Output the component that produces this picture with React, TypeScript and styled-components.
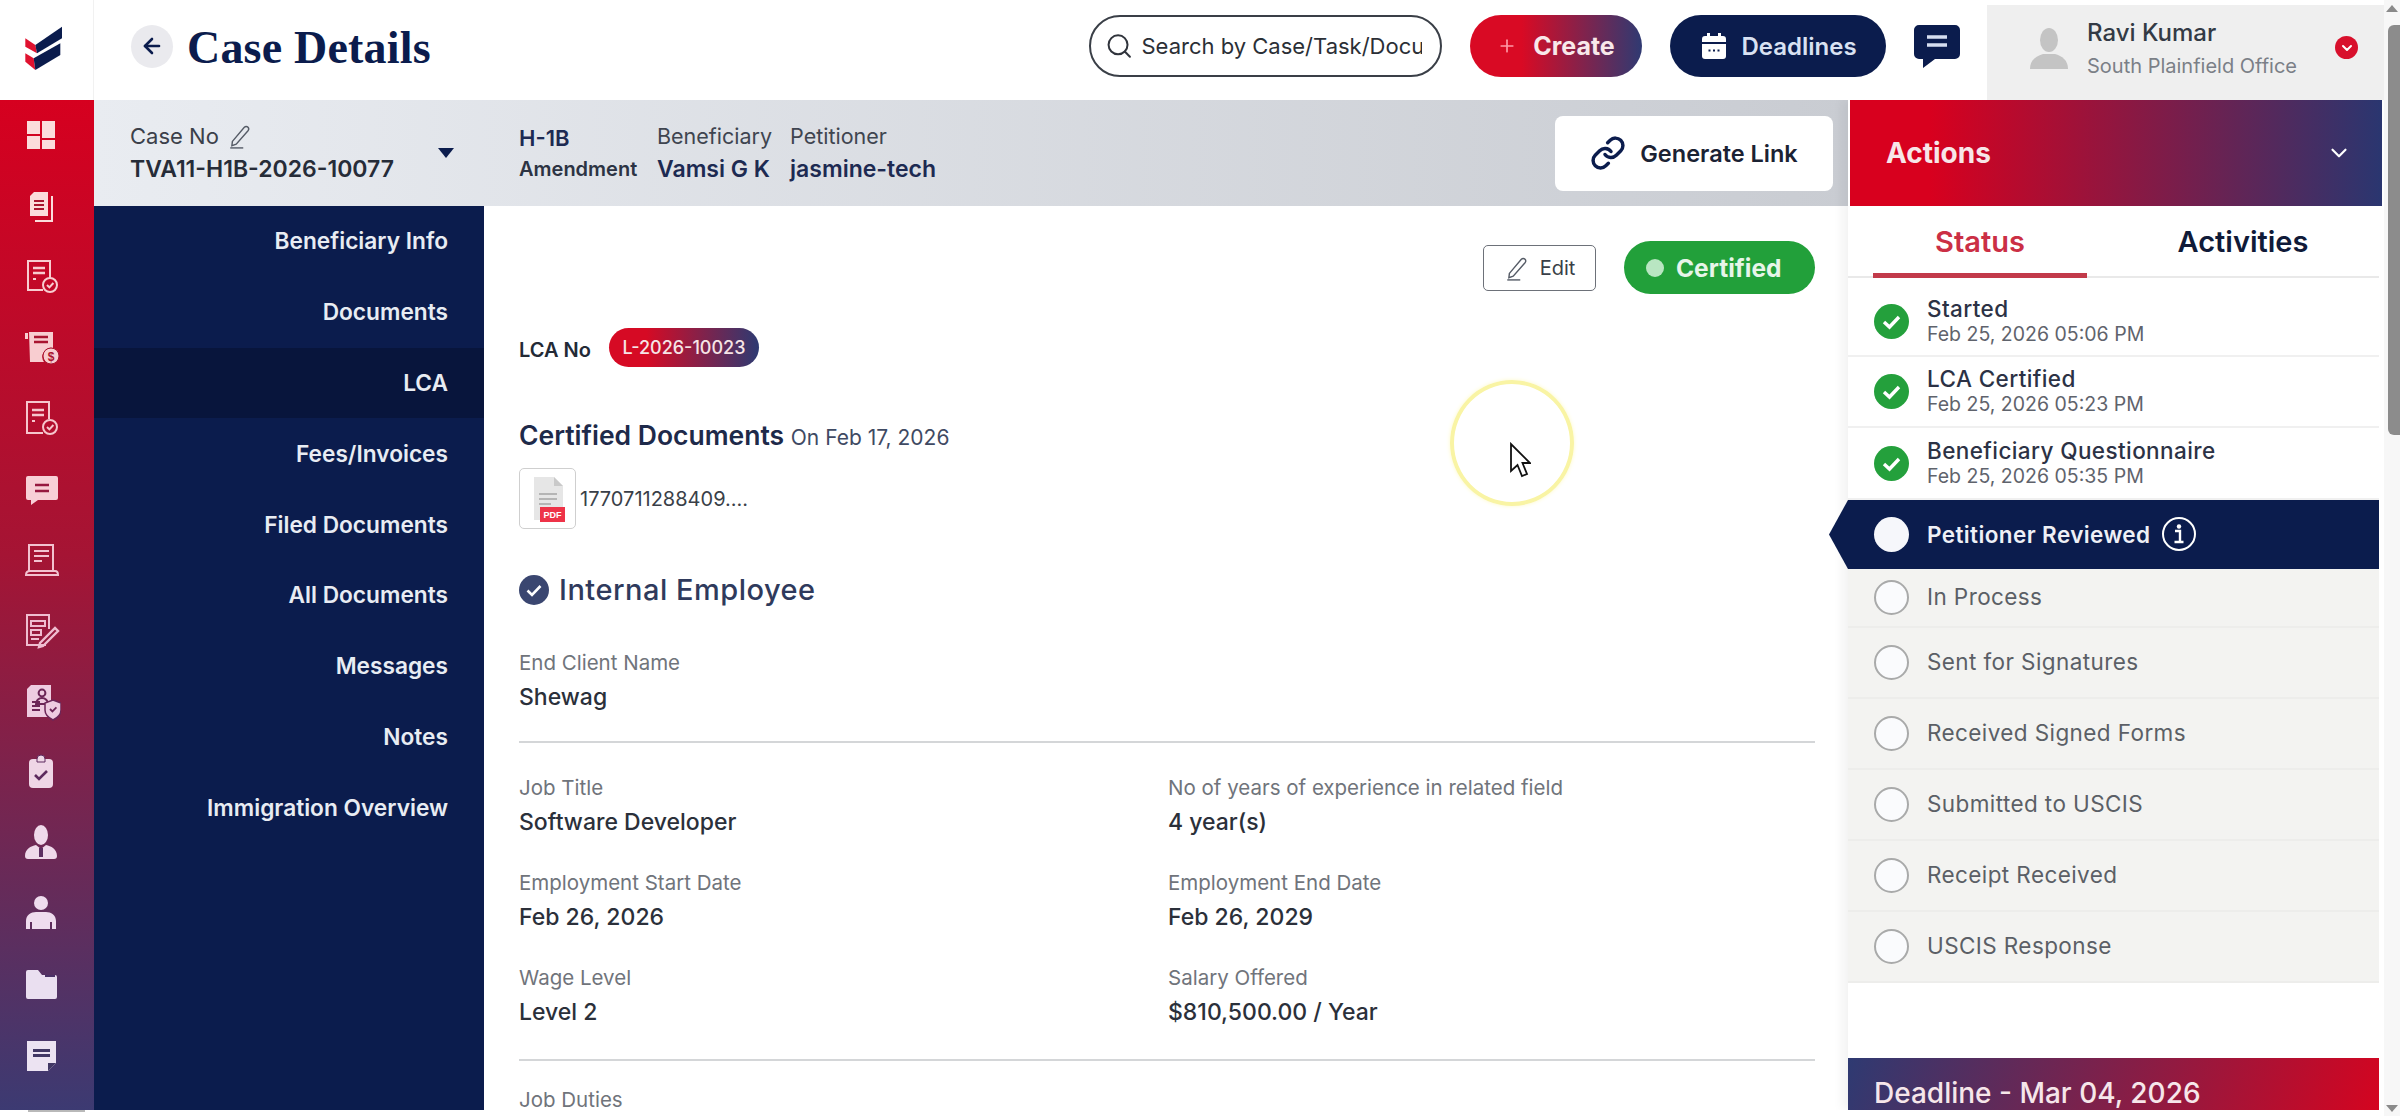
import styled, { createGlobalStyle } from "styled-components";
import { ArrowLeft, ChevronDown, Link, Plus, Search } from "lucide-react";
import { ReactNode } from "react";

const NAVY = "#0b1c4d";
const SANS = `"Inter", "Liberation Sans", sans-serif`;

const GlobalStyle = createGlobalStyle`
    html, body {
        margin: 0;
        padding: 0;
        background: #fff;
        overflow: hidden;
    }
    * {
        box-sizing: border-box;
    }
`;

const railIcons: ReactNode[] = [
    <g fill="#fbdcdc"><rect x="6" y="6" width="13" height="13" /><rect x="6" y="21" width="13" height="13" /><rect x="21" y="6" width="13" height="17" /><rect x="21" y="25" width="13" height="9" /></g>,
    <g><path d="M13 6h14v24H9V10z" fill="#fbdcdc" /><path d="M31 10v25H14" fill="none" stroke="#fbdcdc" strokeWidth="2" /><path d="M13 15h10M13 19h10M13 23h10" stroke="#a8142f" strokeWidth="2" /></g>,
    <g fill="none" stroke="#f8cdd0" strokeWidth="2"><path d="M22 34H7V5h22v17" /><path d="M12 12h12M12 17h12" strokeWidth="2.4" /><path d="M12 23h3" /><circle cx="29" cy="29" r="7" /><path d="M26 29l2.4 2.4 4-4.4" /></g>,
    <g><path d="M4 6h3v6H4z" fill="#f8cdd0" /><path d="M8 5h24v16a9 9 0 0 0-9 14H9z" fill="#f8cdd0" /><path d="M13 10h14M13 15h14" stroke="#a8142f" strokeWidth="2.4" /><circle cx="30" cy="29" r="8" fill="#f8cdd0" stroke="#a8142f" strokeWidth="1" /><text x="30" y="33.5" fontSize="12" fontWeight="700" textAnchor="middle" fill="#a8142f" fontFamily="Liberation Sans">$</text></g>,
    <g fill="none" stroke="#f6c6cd" strokeWidth="2"><path d="M22 35H6V4h22v17" /><path d="M11 12h12M11 17h12" strokeWidth="2.4" /><path d="M11 23h3" /><circle cx="29" cy="29" r="7" /><path d="M26 29l2.4 2.4 4-4.4" /></g>,
    <g><path d="M7 8h28a2 2 0 0 1 2 2v20a2 2 0 0 1-2 2H17l-7 5v-5H7a2 2 0 0 1-2-2V10a2 2 0 0 1 2-2z" fill="#f8cfd6" /><path d="M14 17h14M14 23h14" stroke="#97183f" strokeWidth="2.4" /></g>,
    <g fill="none" stroke="#f3c2d0" strokeWidth="2"><path d="M8 33V6h24v27" /><path d="M13 12h15M13 17h15M13 22h8" /><path d="M5 36c0-3 2-4 4-4h25c2 0 3 1 3 4z" /></g>,
    <g fill="none" stroke="#efbdd0" strokeWidth="2"><path d="M25 35H6V5h22v14" /><path d="M10 11h14v5H10zM10 20h10v5H10zM10 29h8" /><path d="M19 33l-1 4 4-1 15-15-3-3z" strokeWidth="2.4" /></g>,
    <g><path d="M10 4h20v32H6V8z" fill="#eecbe0" /><circle cx="21" cy="12" r="3.4" fill="none" stroke="#6c2557" strokeWidth="2" /><path d="M15 23a6 6 0 0 1 12 0z" fill="none" stroke="#6c2557" strokeWidth="2" /><path d="M11 21h8M11 25h8M11 29h8" stroke="#6c2557" strokeWidth="2" /><path d="M32 19l8 3v7c0 5-4 8-8 10-4-2-8-5-8-10v-7z" fill="#eecbe0" stroke="#6c2557" strokeWidth="1.5" /><path d="M29 28l2.4 2.4 4-4" stroke="#6c2557" strokeWidth="1.8" fill="none" /></g>,
    <g><rect x="8" y="8" width="24" height="29" rx="4" fill="#efd6e6" /><path d="M16 8a4 4 0 0 1 8 0v3h-8z" fill="#efd6e6" stroke="#5d2a5e" strokeWidth="1" /><path d="M14 24l4 4 8-8" fill="none" stroke="#5d2a5e" strokeWidth="2.6" /></g>,
    <g fill="#efd9ea"><ellipse cx="20" cy="13" rx="7" ry="10" /><path d="M4 34c0-7 6-10 11-11l5 4 5-4c5 1 11 4 11 11 0 2-1 3-3 3H7c-2 0-3-1-3-3z" /><path d="M18 26h4v9h-4z" fill="#5d2f62" /></g>,
    <g fill="#efdcee"><circle cx="20" cy="10" r="7" /><path d="M5 36v-8c0-6 5-9 10-9h10c5 0 10 3 10 9v8h-4v-7h-2v7H11v-7H9v7z" /></g>,
    <g><path d="M5 9a2 2 0 0 1 2-2h10l4 5h13a2 2 0 0 1 2 2v20a2 2 0 0 1-2 2H7a2 2 0 0 1-2-2z" fill="#eadff0" /><path d="M24 13h10" stroke="#4b3268" strokeWidth="2" /></g>,
    <g><path d="M6 7h29v22l-8 8H6z" fill="#ece3f2" /><path d="M12 15h17v3H12zM12 20h17v3H12z" fill="#413764" /><path d="M27 37v-8h8" fill="#413764" /></g>,
];

const navItems = ["Beneficiary Info", "Documents", "LCA", "Fees/Invoices", "Filed Documents", "All Documents", "Messages", "Notes", "Immigration Overview"];

const doneSteps = [
    { name: "Started", when: "Feb 25, 2026 05:06 PM", height: 79, first: true },
    { name: "LCA Certified", when: "Feb 25, 2026 05:23 PM", height: 71, first: false },
    { name: "Beneficiary Questionnaire", when: "Feb 25, 2026 05:35 PM", height: 72, first: false },
];

const pendingSteps = ["In Process", "Sent for Signatures", "Received Signed Forms", "Submitted to USCIS", "Receipt Received", "USCIS Response"];

const Pencil = ({ size = 24 }: { size?: number }) => (
    <svg width={size} height={size} viewBox="0 0 24 24" fill="none" stroke="#555b66" strokeWidth="1.3">
        <path d="M5 17L16 4c1-1 2.5-1 3.4 0s.8 2.2 0 3.2L8.5 19.5 4.5 21z" />
        <path d="M3 23h12" />
    </svg>
);

const Detail = ({ label, value }: { label: string; value: string }) => (
    <Field>
        <FieldLabel>{label}</FieldLabel>
        <FieldValue>{value}</FieldValue>
    </Field>
);

export default function App() {
    return (
        <Shell>
            <GlobalStyle />
            <Page>
                <Header>
                    <LogoCell>
                        <svg width="60" height="55" viewBox="0 0 180 165">
                            <path d="M25 55l30 20 5 25-35-20z" fill="#e0122f" />
                            <path d="M55 75l80-55v35l-75 45z" fill={NAVY} />
                            <path d="M25 100l25 15 5 35-30-25z" fill="#e0122f" />
                            <path d="M50 115l80-45v35l-75 45z" fill={NAVY} />
                        </svg>
                    </LogoCell>
                    <BackButton><ArrowLeft size={24} color={NAVY} strokeWidth={2.6} /></BackButton>
                    <PageTitle>Case Details</PageTitle>
                    <HeaderActions>
                        <SearchBox>
                            <Search size={34} color="#30343c" strokeWidth={1.7} />
                            <SearchText>Search by Case/Task/Document</SearchText>
                        </SearchBox>
                        <CreateButton><Plus size={20} color="#ff9aa6" strokeWidth={2} />Create</CreateButton>
                        <DeadlineButton>
                            <svg width="30" height="30" viewBox="0 0 30 30">
                                <path d="M3 8a3 3 0 0 1 3-3h2V2h3v3h8V2h3v3h2a3 3 0 0 1 3 3v3H3z" fill="#fff" />
                                <path d="M3 13h24v12a3 3 0 0 1-3 3H6a3 3 0 0 1-3-3z" fill="#fff" />
                                <path d="M9.5 19.5h2M14 19.5h2M18.5 19.5h2" stroke={NAVY} strokeWidth="2" />
                            </svg>
                            Deadlines
                        </DeadlineButton>
                        <ChatIcon viewBox="0 0 48 44" width="48" height="44">
                            <path d="M6 1h36a5 5 0 0 1 5 5v24a5 5 0 0 1-5 5H22l-12 9v-9H6a5 5 0 0 1-5-5V6a5 5 0 0 1 5-5z" fill={NAVY} />
                            <path d="M14 13h20M14 21h20" stroke="#d6def0" strokeWidth="3.6" />
                        </ChatIcon>
                        <UserBox>
                            <svg width="42" height="42" viewBox="0 0 42 42">
                                <ellipse cx="21" cy="13" rx="9" ry="12" fill="#c4c4c4" />
                                <path d="M2 42c0-9 6-13 13-15h12c7 2 13 6 13 15z" fill="#c4c4c4" />
                            </svg>
                            <UserText>
                                <UserName>Ravi Kumar</UserName>
                                <UserOffice>South Plainfield Office</UserOffice>
                            </UserText>
                            <UserMenu><ChevronDown size={16} color="#fff" strokeWidth={3} /></UserMenu>
                        </UserBox>
                    </HeaderActions>
                </Header>
                <Body>
                    <Rail>
                        {railIcons.map((icon, i) => (
                            <svg key={i} width="40" height="40" viewBox="0 0 40 40">{icon}</svg>
                        ))}
                    </Rail>
                    <Center>
                        <CaseBar>
                            <CaseNo>
                                <CaseLabel>Case No <Pencil size={26} /></CaseLabel>
                                <CaseValue>TVA11-H1B-2026-10077</CaseValue>
                            </CaseNo>
                            <Caret />
                            <VisaBlock>
                                <VisaType>H-1B</VisaType>
                                <VisaSub>Amendment</VisaSub>
                            </VisaBlock>
                            <PartyBlock>
                                <PartyLabel>Beneficiary</PartyLabel>
                                <PartyValue>Vamsi G K</PartyValue>
                            </PartyBlock>
                            <PartyBlock>
                                <PartyLabel>Petitioner</PartyLabel>
                                <PartyValue>jasmine-tech</PartyValue>
                            </PartyBlock>
                            <GenerateLink><Link size={36} color={NAVY} strokeWidth={2.3} />Generate Link</GenerateLink>
                        </CaseBar>
                        <Split>
                            <SideNav>
                                {navItems.map(item => (
                                    <NavItem key={item} $active={item === "LCA"}>{item}</NavItem>
                                ))}
                            </SideNav>
                            <Content>
                                <TopActions>
                                    <EditButton><Pencil size={26} />Edit</EditButton>
                                    <CertifiedPill><PillDot />Certified</CertifiedPill>
                                </TopActions>
                                <LcaRow>
                                    <LcaLabel>LCA No</LcaLabel>
                                    <LcaBadge>L-2026-10023</LcaBadge>
                                </LcaRow>
                                <DocsTitle>Certified Documents <DocsDate>On Feb 17, 2026</DocsDate></DocsTitle>
                                <FileRow>
                                    <FileTile>
                                        <svg width="40" height="50" viewBox="0 0 40 50">
                                            <path d="M6 3h20l9 9v34H6z" fill="#e6e6e6" />
                                            <path d="M26 3l9 9h-9z" fill="#c9c9c9" />
                                            <path d="M11 20h18M11 25h18M11 30h12" stroke="#b5b5b5" strokeWidth="2" />
                                            <rect x="12" y="33" width="25" height="15" fill="#ee3348" />
                                            <text x="24.5" y="44" fontSize="9" fontWeight="700" textAnchor="middle" fill="#fff" fontFamily="Liberation Sans">PDF</text>
                                        </svg>
                                    </FileTile>
                                    <FileName>1770711288409....</FileName>
                                </FileRow>
                                <EmployeeRow>
                                    <svg width="30" height="30" viewBox="0 0 30 30">
                                        <circle cx="15" cy="15" r="15" fill="#3a4670" />
                                        <path d="M8.5 15.5l4.5 4.5 8.5-9" fill="none" stroke="#fff" strokeWidth="2.6" />
                                    </svg>
                                    Internal Employee
                                </EmployeeRow>
                                <Detail label="End Client Name" value="Shewag" />
                                <Divider />
                                <DetailGrid>
                                    <Detail label="Job Title" value="Software Developer" />
                                    <Detail label="No of years of experience in related field" value="4 year(s)" />
                                    <Detail label="Employment Start Date" value="Feb 26, 2026" />
                                    <Detail label="Employment End Date" value="Feb 26, 2029" />
                                    <Detail label="Wage Level" value="Level 2" />
                                    <Detail label="Salary Offered" value="$810,500.00 / Year" />
                                </DetailGrid>
                                <SecondDivider />
                                <FieldLabel>Job Duties</FieldLabel>
                                <PointerRing />
                                <Cursor width="22" height="36" viewBox="0 0 22 36">
                                    <path d="M2 2v27l6.5-6 4.5 11 5-2-4.5-11H21z" fill="#fff" stroke="#111" strokeWidth="1.8" />
                                </Cursor>
                            </Content>
                        </Split>
                    </Center>
                    <ActionPanel>
                        <ActionsHead>Actions<ChevronDown size={26} color="#fff" strokeWidth={2} /></ActionsHead>
                        <Tabs>
                            <Tab $active>Status</Tab>
                            <Tab>Activities</Tab>
                        </Tabs>
                        {doneSteps.map(step => (
                            <DoneRow key={step.name} $height={step.height} $first={step.first}>
                                <svg width="35" height="35" viewBox="0 0 35 35">
                                    <circle cx="17.5" cy="17.5" r="17.5" fill="#24a03c" />
                                    <path d="M10 18l5.5 5 9.5-10" fill="none" stroke="#fff" strokeWidth="3.4" />
                                </svg>
                                <StepText>
                                    <StepName>{step.name}</StepName>
                                    <StepWhen>{step.when}</StepWhen>
                                </StepText>
                            </DoneRow>
                        ))}
                        <CurrentRow>
                            <CurrentDot />
                            <CurrentName>Petitioner Reviewed</CurrentName>
                            <svg width="36" height="36" viewBox="0 0 36 36">
                                <circle cx="18" cy="18" r="16" fill="none" stroke="#fff" strokeWidth="2" />
                                <circle cx="18" cy="10.5" r="2.2" fill="#fff" />
                                <path d="M14 15h5v11M13.5 26h9" fill="none" stroke="#fff" strokeWidth="2.4" />
                            </svg>
                        </CurrentRow>
                        <PendingList>
                            {pendingSteps.map((step, i) => (
                                <PendingRow key={step} $height={i === 0 ? 59 : 71}>
                                    <PendingDot />
                                    <PendingName>{step}</PendingName>
                                </PendingRow>
                            ))}
                        </PendingList>
                        <DeadlineBar>Deadline - Mar 04, 2026</DeadlineBar>
                    </ActionPanel>
                </Body>
                <BottomTrack><BottomThumb /></BottomTrack>
            </Page>
            <ScrollTrack>
                <ScrollArrow />
                <ScrollThumb />
                <ScrollSpacer />
                <ScrollArrow $down />
            </ScrollTrack>
        </Shell>
    );
}

const Shell = styled.div`
    display: flex;
    width: 2400px;
    height: 1116px;
    overflow: hidden;
    font-family: ${SANS};
    color: ${NAVY};
`

const Page = styled.div`
    display: flex;
    flex-direction: column;
    width: 2384px;
    flex: none;
`

const Header = styled.header`
    display: flex;
    align-items: center;
    height: 100px;
    flex: none;
`

const LogoCell = styled.div`
    display: flex;
    align-items: center;
    justify-content: center;
    width: 94px;
    height: 100%;
    padding: 0 0 6px 0;
    border-right: 1px solid #f1f1f1;
`

const BackButton = styled.div`
    display: flex;
    align-items: center;
    justify-content: center;
    width: 42px;
    height: 43px;
    margin: 0 14px 8px 37px;
    border-radius: 50%;
    background: #eaeaee;
`

const PageTitle = styled.h1`
    margin: 0 0 6px 0;
    font-family: "Liberation Serif", serif;
    font-size: 46px;
    font-weight: 700;
    letter-spacing: 0.2px;
    color: ${NAVY};
`

const HeaderActions = styled.div`
    display: flex;
    align-items: center;
    height: 100%;
    margin-left: auto;
`

const SearchBox = styled.div`
    display: flex;
    align-items: center;
    gap: 8px;
    width: 353px;
    height: 62px;
    margin: 0 28px 8px 0;
    padding: 0 18px 0 14px;
    border: 2px solid #3a3f47;
    border-radius: 31px;
    overflow: hidden;
`

const SearchText = styled.span`
    font-size: 22px;
    color: #2b2f36;
    white-space: nowrap;
    overflow: hidden;
`

const Pill = styled.div`
    display: flex;
    align-items: center;
    justify-content: center;
    height: 62px;
    margin-bottom: 8px;
    border-radius: 31px;
    font-size: 24px;
    font-weight: 600;
`

const CreateButton = styled(Pill)`
    gap: 16px;
    width: 172px;
    margin-right: 28px;
    background: linear-gradient(90deg, #d90a24 30%, #2f3a72);
    color: #f8e8ea;
    font-size: 25px;
    font-weight: 700;
`

const DeadlineButton = styled(Pill)`
    gap: 12px;
    width: 216px;
    margin-right: 27px;
    background: ${NAVY};
    color: #d9e1f2;
`

const ChatIcon = styled.svg`
    margin: 0 26px 8px 0;
`

const UserBox = styled.div`
    display: flex;
    align-items: center;
    width: 397px;
    height: 95px;
    margin-top: 5px;
    padding: 0 26px 10px 41px;
    background: #efefef;
`

const UserText = styled.div`
    display: flex;
    flex-direction: column;
    gap: 7px;
    margin-left: 17px;
`

const UserName = styled.div`
    font-size: 24px;
    font-weight: 500;
    color: #333a45;
`

const UserOffice = styled.div`
    font-size: 20px;
    color: #7b7f87;
`

const UserMenu = styled.div`
    display: flex;
    align-items: center;
    justify-content: center;
    width: 23px;
    height: 23px;
    margin-left: auto;
    border-radius: 50%;
    background: #d8102c;
`

const Body = styled.div`
    display: flex;
    height: 1010px;
    flex: none;
    overflow: hidden;
`

const Rail = styled.nav`
    display: flex;
    flex-direction: column;
    align-items: center;
    gap: 30.7px;
    width: 94px;
    flex: none;
    padding: 15px 12px 0 0;
    overflow: hidden;
    background: linear-gradient(180deg, #d6001f 0%, #a51434 45%, #3c3a72 100%);
`

const Center = styled.div`
    display: flex;
    flex-direction: column;
    width: 1754px;
    flex: none;
`

const CaseBar = styled.div`
    display: flex;
    align-items: center;
    height: 106px;
    flex: none;
    padding: 0 15px 0 36px;
    background: linear-gradient(90deg, #e9ecf1 0%, #c9ccd2 100%);
`

const CaseNo = styled.div`
    display: flex;
    flex-direction: column;
    gap: 6px;
    width: 308px;
`

const CaseLabel = styled.div`
    display: flex;
    align-items: center;
    gap: 8px;
    font-size: 22px;
    color: #3b404a;
`

const CaseValue = styled.div`
    font-size: 23px;
    font-weight: 600;
    color: #262c38;
`

const Caret = styled.div`
    width: 0;
    height: 0;
    border-left: 8px solid transparent;
    border-right: 8px solid transparent;
    border-top: 10px solid ${NAVY};
`

const VisaBlock = styled.div`
    display: flex;
    flex-direction: column;
    gap: 6px;
    margin-left: 65px;
    width: 138px;
`

const VisaType = styled.div`
    font-size: 22px;
    font-weight: 600;
    color: #1d2a52;
`

const VisaSub = styled.div`
    font-size: 20px;
    font-weight: 600;
    color: #2c3343;
`

const PartyBlock = styled.div`
    display: flex;
    flex-direction: column;
    gap: 6px;
    margin-right: 18px;
`

const PartyLabel = styled.div`
    font-size: 21.5px;
    color: #3f4550;
`

const PartyValue = styled.div`
    font-size: 23px;
    font-weight: 600;
    color: #1d2a52;
`

const GenerateLink = styled.div`
    display: flex;
    align-items: center;
    justify-content: center;
    gap: 14px;
    width: 278px;
    height: 75px;
    margin-left: auto;
    border-radius: 8px;
    background: #fff;
    font-size: 23.5px;
    font-weight: 600;
    color: #1b2233;
`

const Split = styled.div`
    display: flex;
    flex: 1;
    min-height: 0;
`

const SideNav = styled.aside`
    display: flex;
    flex-direction: column;
    width: 390px;
    flex: none;
    background: ${NAVY};
`

const NavItem = styled.div<{ $active?: boolean }>`
    display: flex;
    align-items: center;
    justify-content: flex-end;
    height: 70.8px;
    padding: 0 36px 1px 0;
    font-size: 22.7px;
    font-weight: 600;
    color: #e8ecf3;
    background: ${p => (p.$active ? "#08153c" : "transparent")};
`

const Content = styled.main`
    position: relative;
    flex: 1;
    min-width: 0;
    padding: 35px 33px 0 35px;
    overflow: hidden;
    background: #fff;
`

const TopActions = styled.div`
    display: flex;
    align-items: center;
    justify-content: flex-end;
    gap: 28px;
`

const EditButton = styled.div`
    display: flex;
    align-items: center;
    justify-content: center;
    gap: 10px;
    width: 113px;
    height: 46px;
    border: 1px solid #6d7179;
    border-radius: 5px;
    font-size: 20px;
    color: #3a3f48;
`

const CertifiedPill = styled.div`
    display: flex;
    align-items: center;
    gap: 12px;
    width: 191px;
    height: 53px;
    padding-left: 22px;
    border-radius: 27px;
    background: #22a03a;
    font-size: 24.5px;
    font-weight: 700;
    color: #e7f5e9;
`

const PillDot = styled.span`
    width: 18px;
    height: 18px;
    border-radius: 50%;
    background: #b9e6c2;
`

const LcaRow = styled.div`
    display: flex;
    align-items: center;
    gap: 18px;
    margin-top: 34px;
`

const LcaLabel = styled.span`
    margin-top: 5px;
    font-size: 20px;
    font-weight: 600;
    color: #232a36;
`

const LcaBadge = styled.span`
    display: flex;
    align-items: center;
    justify-content: center;
    width: 150px;
    height: 39px;
    border-radius: 20px;
    background: linear-gradient(90deg, #d60a24 25%, #2d3a72);
    font-size: 18px;
    font-weight: 500;
    color: #f6e4e6;
`

const DocsTitle = styled.div`
    margin-top: 50px;
    font-size: 26.5px;
    font-weight: 600;
    line-height: 36px;
    color: #1e2a4a;
`

const DocsDate = styled.span`
    font-size: 21px;
    font-weight: 400;
    color: #3f4a63;
`

const FileRow = styled.div`
    display: flex;
    align-items: center;
    gap: 4px;
    margin-top: 12px;
`

const FileTile = styled.div`
    display: flex;
    align-items: center;
    justify-content: center;
    width: 57px;
    height: 61px;
    border: 1px solid #cfcfcf;
    border-radius: 5px;
`

const FileName = styled.span`
    font-size: 20px;
    color: #3a3f48;
`

const EmployeeRow = styled.div`
    display: flex;
    align-items: center;
    gap: 10px;
    margin-top: 43px;
    font-size: 29px;
    font-weight: 500;
    letter-spacing: 0.5px;
    line-height: 36px;
    color: #2f3a5c;
`

const Field = styled.div`
    margin-top: 43px;
`

const FieldLabel = styled.div`
    font-size: 20.5px;
    line-height: 24px;
    color: #70747b;
`

const FieldValue = styled.div`
    margin-top: 8px;
    font-size: 23px;
    font-weight: 500;
    line-height: 28px;
    color: #2b303a;
`

const Divider = styled.hr`
    margin: 30px 0 33px 0;
    border: 0;
    border-top: 2px solid #d4d6d8;
`

const SecondDivider = styled(Divider)`
    margin: 33px 0 27px 0;
`

const DetailGrid = styled.div`
    display: grid;
    grid-template-columns: 649px 1fr;
    row-gap: 35px;
    ${Field} {
        margin-top: 0;
    }
`

const PointerRing = styled.div`
    position: absolute;
    left: 966px;
    top: 174px;
    width: 124px;
    height: 126px;
    border: 4px solid #f9f4a4;
    border-radius: 50%;
    box-shadow: 0 0 4px #fdf9c8;
`

const Cursor = styled.svg`
    position: absolute;
    left: 1025px;
    top: 236px;
`

const ActionPanel = styled.aside`
    position: relative;
    z-index: 1;
    display: flex;
    flex-direction: column;
    width: 536px;
    flex: none;
    padding-right: 5px;
    background: #fff;
    box-shadow: -6px 0 10px rgba(0, 0, 0, 0.05);
`

const ActionsHead = styled.div`
    display: flex;
    align-items: center;
    justify-content: space-between;
    height: 106px;
    margin: 0 -3px 0 2px;
    padding: 0 30px 0 36px;
    flex: none;
    background: linear-gradient(90deg, #d8001e 15%, #2a3670 100%);
    font-size: 28px;
    font-weight: 700;
    color: #f7e6e8;
`

const Tabs = styled.div`
    display: flex;
    height: 72px;
    flex: none;
    padding: 0 0 0 25px;
    border-bottom: 2px solid #e9e9e9;
`

const Tab = styled.div<{ $active?: boolean }>`
    position: relative;
    display: flex;
    align-items: center;
    justify-content: center;
    width: ${p => (p.$active ? "214px" : "auto")};
    flex: ${p => (p.$active ? "none" : "1")};
    padding-left: ${p => (p.$active ? "0" : "20px")};
    font-size: 29px;
    font-weight: 600;
    color: ${p => (p.$active ? "#cb2f45" : "#101a38")};
    ${p => p.$active && `
        &::after {
            content: "";
            position: absolute;
            left: 0;
            right: 0;
            bottom: -2px;
            height: 5px;
            background: #c23a4a;
        }
    `}
`

const DoneRow = styled.div<{ $height: number; $first?: boolean }>`
    display: flex;
    align-items: center;
    gap: 18px;
    height: ${p => p.$height}px;
    flex: none;
    padding: ${p => (p.$first ? "10px" : "0")} 0 0 26px;
    border-bottom: 2px solid #f0f0f0;
`

const StepText = styled.div`
    display: flex;
    flex-direction: column;
`

const StepName = styled.div`
    font-size: 22.5px;
    font-weight: 500;
    letter-spacing: 0.4px;
    line-height: 26px;
    color: #2c3245;
`

const StepWhen = styled.div`
    font-size: 19.5px;
    line-height: 25px;
    color: #5f636c;
`

const CurrentRow = styled.div`
    position: relative;
    display: flex;
    align-items: center;
    height: 69px;
    flex: none;
    padding: 0 0 1px 26px;
    background: ${NAVY};
    &::before {
        content: "";
        position: absolute;
        left: -19px;
        top: 0;
        width: 19px;
        height: 100%;
        background: ${NAVY};
        clip-path: polygon(100% 0, 100% 100%, 0 50%);
    }
`

const CurrentDot = styled.span`
    width: 35px;
    height: 35px;
    border-radius: 50%;
    background: #f6f7fb;
`

const CurrentName = styled.span`
    margin: 0 10px 0 18px;
    font-size: 22.5px;
    font-weight: 600;
    letter-spacing: 0.4px;
    color: #eef0f6;
`

const PendingList = styled.div`
    background: #f3f3f1;
`

const PendingRow = styled.div<{ $height: number }>`
    display: flex;
    align-items: center;
    gap: 18px;
    height: ${p => p.$height}px;
    padding-left: 26px;
    border-bottom: 2px solid #ededeb;
`

const PendingDot = styled.span`
    width: 35px;
    height: 35px;
    border: 2px solid #a9aaaa;
    border-radius: 50%;
    background: #fafbfd;
`

const PendingName = styled.span`
    margin-top: -2px;
    font-size: 22.5px;
    letter-spacing: 0.4px;
    color: #5b5f66;
`

const DeadlineBar = styled.div`
    height: 65px;
    flex: none;
    margin-top: 75px;
    padding: 18px 0 0 26px;
    background: linear-gradient(110deg, #2e3a72 0%, #d6041f 100%);
    font-size: 28px;
    font-weight: 500;
    color: #f6e6ea;
`

const BottomTrack = styled.div`
    height: 6px;
    flex: none;
    background: #fff;
`

const BottomThumb = styled.div`
    width: 57px;
    height: 2px;
    margin-left: 28px;
    background: #b9b9b9;
`

const ScrollTrack = styled.div`
    display: flex;
    flex-direction: column;
    align-items: flex-end;
    width: 16px;
    flex: none;
    background: #f7f7f7;
`

const ScrollArrow = styled.div<{ $down?: boolean }>`
    width: 0;
    height: 0;
    margin: ${p => (p.$down ? "0 2px 4px 0" : "5px 2px 0 0")};
    border-left: 6px solid transparent;
    border-right: 6px solid transparent;
    ${p => (p.$down ? "border-top: 7px solid #8a8a8a;" : "border-bottom: 7px solid #8a8a8a;")}
`

const ScrollThumb = styled.div`
    width: 12px;
    height: 410px;
    margin-top: 13px;
    border-radius: 6px 0 0 6px;
    background: #8c8c8c;
`

const ScrollSpacer = styled.div`
    flex: 1;
`
